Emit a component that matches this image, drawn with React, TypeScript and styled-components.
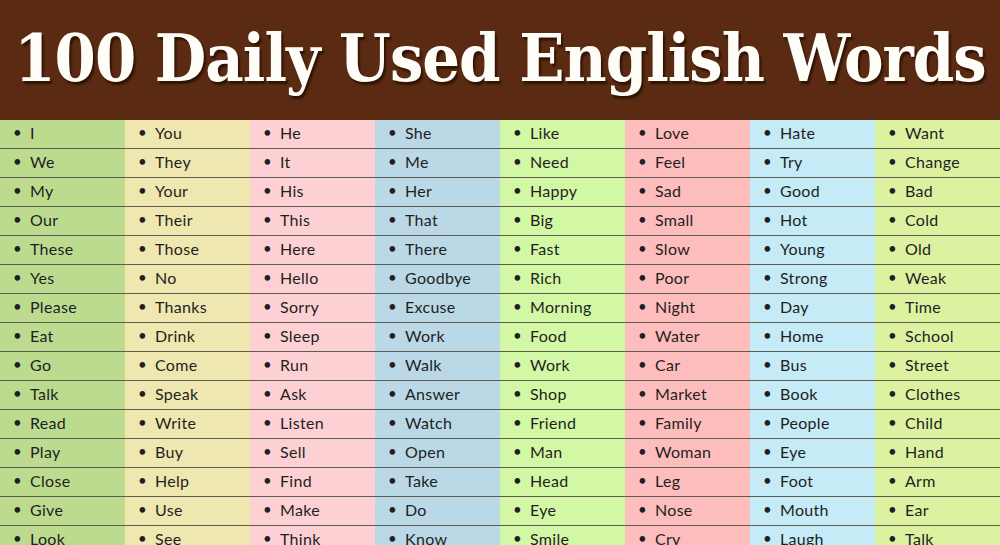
import React from "react";
import styled, { createGlobalStyle } from "styled-components";

const GlobalStyle = createGlobalStyle`
    html, body {
        margin: 0;
        padding: 0;
        background: #ffffff;
        overflow: hidden;
    }
`

const Page = styled.div`
    width: 1000px;
    height: 545px;
    overflow: hidden;
    display: flex;
    flex-direction: column;
`

const Banner = styled.header`
    height: 120px;
    flex-shrink: 0;
    background: #5b2a12;
    display: flex;
    align-items: center;
    justify-content: center;
`

const Title = styled.h1`
    margin: 0;
    margin-top: -4px;
    color: #fffdf8;
    font-family: "DejaVu Serif", "Liberation Serif", serif;
    font-stretch: condensed;
    font-weight: bold;
    font-size: 66px;
    letter-spacing: -1px;
    white-space: nowrap;
    text-shadow: 2px 3px 2px rgba(30, 10, 0, 0.7);
`

const Board = styled.div`
    display: grid;
    grid-template-columns: repeat(8, 125px);
`

const Column = styled.ul<{ $bg: string }>`
    margin: 0;
    padding: 0;
    list-style: none;
    background: ${p => p.$bg};
`

const Word = styled.li`
    height: 28px;
    box-sizing: content-box;
    border-bottom: 1px solid #5d5b52;
    display: flex;
    align-items: center;
    padding-left: 13px;
    font-family: "Lato", "Noto Sans", sans-serif;
    font-size: 16px;
    line-height: 1;
    color: #1f1f1f;
    letter-spacing: 0.3px;
    & > span {
        margin-top: -3px;
    }
    &::before {
        content: "•";
        margin-top: -3px;
        margin-right: 8px;
        font-size: 15px;
    }
`

const columns: { bg: string, words: string[] }[] = [
    { bg: "#bcdb8f", words: ["I", "We", "My", "Our", "These", "Yes", "Please", "Eat", "Go", "Talk", "Read", "Play", "Close", "Give", "Look"] },
    { bg: "#efe7b0", words: ["You", "They", "Your", "Their", "Those", "No", "Thanks", "Drink", "Come", "Speak", "Write", "Buy", "Help", "Use", "See"] },
    { bg: "#fdd1d4", words: ["He", "It", "His", "This", "Here", "Hello", "Sorry", "Sleep", "Run", "Ask", "Listen", "Sell", "Find", "Make", "Think"] },
    { bg: "#bad8e6", words: ["She", "Me", "Her", "That", "There", "Goodbye", "Excuse", "Work", "Walk", "Answer", "Watch", "Open", "Take", "Do", "Know"] },
    { bg: "#d3f8a5", words: ["Like", "Need", "Happy", "Big", "Fast", "Rich", "Morning", "Food", "Work", "Shop", "Friend", "Man", "Head", "Eye", "Smile"] },
    { bg: "#fdbdbd", words: ["Love", "Feel", "Sad", "Small", "Slow", "Poor", "Night", "Water", "Car", "Market", "Family", "Woman", "Leg", "Nose", "Cry"] },
    { bg: "#c4ebf6", words: ["Hate", "Try", "Good", "Hot", "Young", "Strong", "Day", "Home", "Bus", "Book", "People", "Eye", "Foot", "Mouth", "Laugh"] },
    { bg: "#dcf2a1", words: ["Want", "Change", "Bad", "Cold", "Old", "Weak", "Time", "School", "Street", "Clothes", "Child", "Hand", "Arm", "Ear", "Talk"] },
]

export default function App() {
    return (
        <>
            <GlobalStyle />
            <Page>
                <Banner>
                    <Title>100 Daily Used English Words</Title>
                </Banner>
                <Board>
                    {columns.map((col, i) => (
                        <Column key={i} $bg={col.bg}>
                            {col.words.map((w, j) => <Word key={j}><span>{w}</span></Word>)}
                        </Column>
                    ))}
                </Board>
            </Page>
        </>
    )
}
